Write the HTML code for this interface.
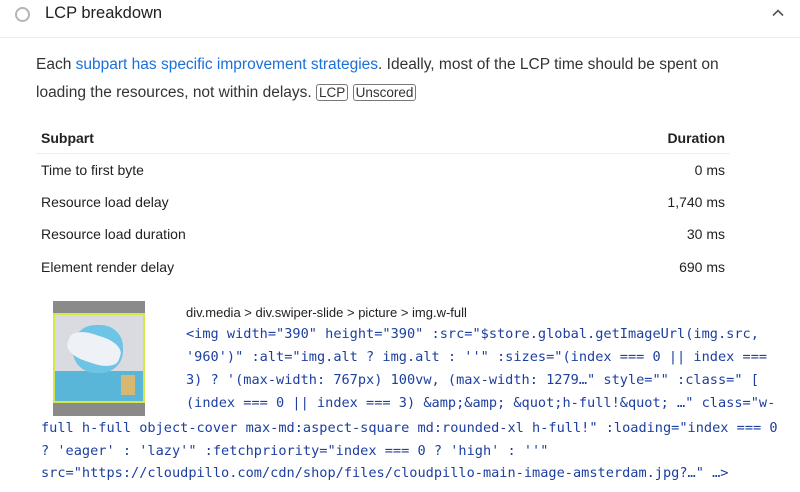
<!DOCTYPE html>
<html><head><meta charset="utf-8"><style>
body{margin:0;width:800px;height:492px;background:#fff;overflow:hidden;font-family:"Liberation Sans",sans-serif;color:#212121;position:relative}
.a{position:absolute;white-space:nowrap}
.t{font-size:14px;color:#212121}
.code{font-family:"DejaVu Sans Mono",monospace;font-size:13.6px;color:#1c3fa0}
.badge{border:1px solid #777;border-radius:3px;padding:0 2px;font-size:13.5px;line-height:15px;display:inline-block}
</style></head><body>
<div class="a" style="left:15px;top:7px;width:11px;height:11px;border:2px solid #b5b5b5;border-radius:50%"></div>
<div class="a" style="left:45px;top:4px;font-size:16.5px;color:#212121">LCP breakdown</div>
<svg class="a" style="left:772px;top:9px" width="12" height="8"><path d="M1 6.5 L6 1.5 L11 6.5" fill="none" stroke="#555" stroke-width="1.6"/></svg>
<div class="a" style="left:0;top:37px;width:800px;height:1px;background:#ececec"></div>
<div class="a" style="left:36px;top:51px;font-size:15.5px;color:#333;line-height:28px">Each <span style="color:#1a6fd8">subpart has specific improvement strategies</span>. Ideally, most of the LCP time should be spent on<br>loading the resources, not within delays. <span class="badge">LCP</span> <span class="badge">Unscored</span></div>
<div class="a t" style="left:41px;top:130px;font-weight:bold">Subpart</div>
<div class="a t" style="right:75px;top:130px;font-weight:bold">Duration</div>
<div class="a" style="left:36px;top:153px;width:694px;height:1px;background:#eee"></div>
<div class="a t" style="left:41px;top:162px">Time to first byte</div>
<div class="a t" style="right:75px;top:162px">0 ms</div>
<div class="a t" style="left:41px;top:194px">Resource load delay</div>
<div class="a t" style="right:75px;top:194px">1,740 ms</div>
<div class="a t" style="left:41px;top:226px">Resource load duration</div>
<div class="a t" style="right:75px;top:226px">30 ms</div>
<div class="a t" style="left:41px;top:259px">Element render delay</div>
<div class="a t" style="right:75px;top:259px">690 ms</div>
<div class="a" style="left:53px;top:301px;width:92px;height:115px;background:#8a8a8a"></div>
<div class="a" style="left:53px;top:313px;width:88px;height:86px;border:2px solid #d4e84a;background:#d9dbe0;overflow:hidden">
 <div class="a" style="left:0;top:56px;width:88px;height:30px;background:#5ab6d8"></div>
 <div class="a" style="left:18px;top:10px;width:50px;height:48px;border-radius:45%;background:#6ec4e4"></div>
 <div class="a" style="left:12px;top:20px;width:54px;height:28px;border-radius:40%;background:#eef2f6;transform:rotate(18deg)"></div>
 <div class="a" style="left:66px;top:60px;width:14px;height:20px;background:#d8b870"></div>
</div>
<div class="a" style="left:186px;top:305px;font-size:13px;color:#212121">div.media &gt; div.swiper-slide &gt; picture &gt; img.w-full</div>
<div class="a code" style="left:186px;top:323px;line-height:23px">&lt;img width="390" height="390" :src="$store.global.getImageUrl(img.src,<br>'960')" :alt="img.alt ? img.alt : ''" :sizes="(index === 0 || index ===<br>3) ? '(max-width: 767px) 100vw, (max-width: 1279…" style="" :class=" [<br>(index === 0 || index === 3) &amp;amp;&amp;amp; &amp;quot;h-full!&amp;quot; …" class="w-</div>
<div class="a code" style="left:41px;top:417px;line-height:22.6px">full h-full object-cover max-md:aspect-square md:rounded-xl h-full!" :loading="index === 0<br>? 'eager' : 'lazy'" :fetchpriority="index === 0 ? 'high' : ''"<br>src="https://cloudpillo.com/cdn/shop/files/cloudpillo-main-image-amsterdam.jpg?…" …&gt;</div>
</body></html>
